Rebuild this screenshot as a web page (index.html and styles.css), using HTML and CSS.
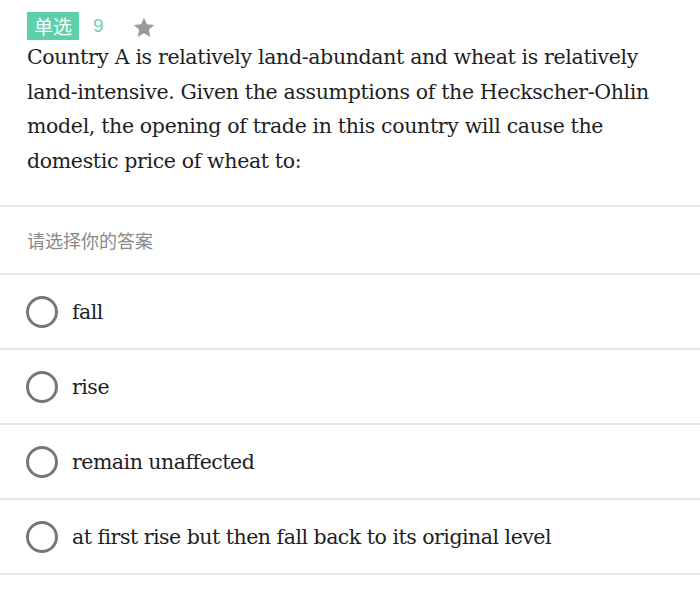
FILE: index.html
```html
<!DOCTYPE html>
<html>

<head>
    <meta charset="UTF-8">
    <title>单选题</title>
    <link rel="stylesheet" href="styles.css">
</head>

<body>
    <div class="question">
        <div class="meta">
            <span class="tag">单选</span>
            <span class="num">9</span>
            <svg class="star" width="22" height="21" viewBox="0 0 24 23">
                <path d="M12 0.8l3.3 7.2 7.9 0.8-5.9 5.3 1.7 7.8L12 17.9l-7 4 1.7-7.8-5.9-5.3 7.9-0.8z" fill="#9a9a9a"/>
            </svg>
        </div>
        <p class="stem">Country A is relatively land-abundant and wheat is relatively land-intensive. Given the assumptions of the Heckscher-Ohlin model, the opening of trade in this country will cause the domestic price of wheat to:</p>
    </div>

    <div class="hint">请选择你的答案</div>

    <ul class="options">
        <li><i class="radio"></i><span>fall</span></li>
        <li><i class="radio"></i><span>rise</span></li>
        <li><i class="radio"></i><span>remain unaffected</span></li>
        <li><i class="radio"></i><span>at first rise but then fall back to its original level</span></li>
    </ul>
</body>

</html>
```

FILE: styles.css
```css
* {
    box-sizing: border-box;
}
body {
    margin: 0;
    background: white;
    font-family: "DejaVu Serif", "Noto Sans CJK SC", serif;
    color: #222;
}
.question {
    padding: 12px 27px 0 27px;
    border-bottom: 2px solid #e8e8e8;
    height: 207px;
}
.meta {
    display: flex;
    align-items: center;
    height: 28px;
}
.tag {
    display: inline-block;
    background: #5ccfab;
    color: white;
    font-family: "Noto Sans CJK SC", sans-serif;
    font-size: 19px;
    line-height: 28px;
    height: 28px;
    width: 52px;
    text-align: center;
}
.num {
    color: #6dd0b2;
    font-family: "Liberation Sans", "Noto Sans", sans-serif;
    font-size: 19px;
    margin-left: 14px;
}
.star {
    margin-left: 29px;
    margin-top: 3px;
}
.stem {
    margin: 0;
    font-size: 20.5px;
    line-height: 34.5px;
    letter-spacing: -0.35px;
    color: #1e1e1e;
}
.hint {
    height: 68px;
    padding-left: 27px;
    display: flex;
    align-items: center;
    font-family: "Noto Sans CJK SC", sans-serif;
    font-size: 18px;
    color: #8a8a8a;
    border-bottom: 2px solid #e8e8e8;
}
.options {
    list-style: none;
    margin: 0;
    padding: 0;
}
.options li {
    height: 75px;
    display: flex;
    align-items: center;
    padding-left: 26px;
    border-bottom: 2px solid #e8e8e8;
    font-size: 20.5px;
    letter-spacing: -0.5px;
    color: #1e1e1e;
}
.radio {
    width: 32px;
    height: 32px;
    border: 3px solid #777;
    border-radius: 50%;
    margin-right: 14px;
    flex-shrink: 0;
}
```
